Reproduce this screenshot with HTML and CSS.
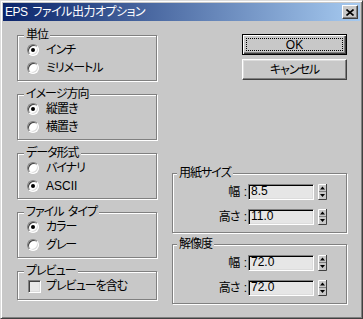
FILE: index.html
```html
<!DOCTYPE html>
<html>
  <head>
    <link rel="stylesheet" href="styles.css">
  </head>
  <body>
    <div class="window">
      <div class="titlebar">
        <span class="title">EPS ファイル出力オプション</span>
        <button class="close-btn">
          <svg width="8" height="7" viewBox="0 0 8 7"><path d="M0.5 0.5L7.5 6.5M7.5 0.5L0.5 6.5" stroke="#000" stroke-width="1.6"/></svg>
        </button>
      </div>
      <main class="content">
        <div class="left-col">
          <fieldset class="group">
            <legend>単位</legend>
            <label class="option"><span class="radio checked"></span>インチ</label>
            <label class="option"><span class="radio"></span>ミリメートル</label>
          </fieldset>
          <fieldset class="group">
            <legend>イメージ方向</legend>
            <label class="option"><span class="radio checked"></span>縦置き</label>
            <label class="option"><span class="radio"></span>横置き</label>
          </fieldset>
          <fieldset class="group">
            <legend>データ形式</legend>
            <label class="option"><span class="radio"></span>バイナリ</label>
            <label class="option latin"><span class="radio checked"></span>ASCII</label>
          </fieldset>
          <fieldset class="group">
            <legend>ファイル タイプ</legend>
            <label class="option"><span class="radio checked"></span>カラー</label>
            <label class="option"><span class="radio"></span>グレー</label>
          </fieldset>
          <fieldset class="group preview-group">
            <legend>プレビュー</legend>
            <label class="option"><span class="checkbox"></span>プレビューを含む</label>
          </fieldset>
        </div>

        <div class="right-col">
          <div class="buttons">
            <button class="btn default">OK</button>
            <button class="btn">キャンセル</button>
          </div>

          <fieldset class="group num-group size-group">
            <legend>用紙サイズ</legend>
            <div class="field-row">
              <span class="field-label">幅 :</span>
              <span class="field-input">8.5</span>
              <svg class="spinner" width="9" height="16" viewBox="0 0 9 16">
                <rect width="9" height="16" fill="#c8c8c8"/>
                <path d="M0.5 15V0.5H8" stroke="#fff" fill="none"/>
                <path d="M0.5 15.5H8.5V0" stroke="#404040" fill="none"/>
                <path d="M1 7.5H8" stroke="#808080"/>
                <path d="M4.5 2.5L7 5.5H2Z" fill="#000"/>
                <path d="M2 10H7L4.5 13Z" fill="#000"/>
              </svg>
            </div>
            <div class="field-row">
              <span class="field-label">高さ :</span>
              <span class="field-input">11.0</span>
              <svg class="spinner" width="9" height="16" viewBox="0 0 9 16">
                <rect width="9" height="16" fill="#c8c8c8"/>
                <path d="M0.5 15V0.5H8" stroke="#fff" fill="none"/>
                <path d="M0.5 15.5H8.5V0" stroke="#404040" fill="none"/>
                <path d="M1 7.5H8" stroke="#808080"/>
                <path d="M4.5 2.5L7 5.5H2Z" fill="#000"/>
                <path d="M2 10H7L4.5 13Z" fill="#000"/>
              </svg>
            </div>
          </fieldset>

          <fieldset class="group num-group res-group">
            <legend>解像度</legend>
            <div class="field-row">
              <span class="field-label">幅 :</span>
              <span class="field-input">72.0</span>
              <svg class="spinner" width="9" height="16" viewBox="0 0 9 16">
                <rect width="9" height="16" fill="#c8c8c8"/>
                <path d="M0.5 15V0.5H8" stroke="#fff" fill="none"/>
                <path d="M0.5 15.5H8.5V0" stroke="#404040" fill="none"/>
                <path d="M1 7.5H8" stroke="#808080"/>
                <path d="M4.5 2.5L7 5.5H2Z" fill="#000"/>
                <path d="M2 10H7L4.5 13Z" fill="#000"/>
              </svg>
            </div>
            <div class="field-row">
              <span class="field-label">高さ :</span>
              <span class="field-input">72.0</span>
              <svg class="spinner" width="9" height="16" viewBox="0 0 9 16">
                <rect width="9" height="16" fill="#c8c8c8"/>
                <path d="M0.5 15V0.5H8" stroke="#fff" fill="none"/>
                <path d="M0.5 15.5H8.5V0" stroke="#404040" fill="none"/>
                <path d="M1 7.5H8" stroke="#808080"/>
                <path d="M4.5 2.5L7 5.5H2Z" fill="#000"/>
                <path d="M2 10H7L4.5 13Z" fill="#000"/>
              </svg>
            </div>
          </fieldset>
        </div>
      </main>
    </div>
  </body>
</html>
```

FILE: styles.css
```css
* {
  box-sizing: border-box;
}

body {
  margin: 0;
  background: #c8c8c8;
  color: #000;
  font-family: "Liberation Sans", "Noto Sans CJK JP", sans-serif;
  font-size: 12px;
  font-feature-settings: "palt";
  letter-spacing: -1px;
  word-spacing: 2px;
}

.window {
  width: 363px;
  height: 319px;
  display: flex;
  flex-direction: column;
  background: #c8c8c8;
  border: 1px solid;
  border-color: #dcdcdc #404040 #404040 #dcdcdc;
  box-shadow: inset 1px 1px #fff, inset -1px -1px #808080;
  padding: 2px;
}

.titlebar {
  flex: none;
  height: 18px;
  display: flex;
  align-items: center;
  justify-content: space-between;
  padding: 0 2px 0 2px;
  background: linear-gradient(to right, #0a246a, #a6caf0);
  color: #fff;
  line-height: 12px;
  letter-spacing: -0.5px;
}

.close-btn {
  all: unset;
  box-sizing: border-box;
  width: 16px;
  height: 14px;
  display: flex;
  align-items: center;
  justify-content: center;
  background: #c8c8c8;
  border: 1px solid;
  border-color: #fff #404040 #404040 #fff;
  box-shadow: inset -1px -1px #808080;
}

.content {
  flex: 1;
  display: flex;
  gap: 15px;
  padding: 8px 13px 12px 14px;
}

.left-col {
  width: 140px;
  display: flex;
  flex-direction: column;
  gap: 7px;
}

.right-col {
  width: 175px;
  display: flex;
  flex-direction: column;
  padding-top: 5px;
}

/* etched group box */
.group {
  margin: 0;
  min-width: 0;
  padding: 0 0 3px 6px;
  border: 1px solid #808080;
  box-shadow: inset 1px 1px #fff, 1px 1px #fff;
}

.group legend {
  padding: 0 2px;
  height: 12px;
  line-height: 12px;
  background: #c8c8c8;
}

.preview-group {
  padding-bottom: 4px;
}

.option {
  display: flex;
  align-items: center;
  height: 18px;
  line-height: 12px;
}

.option.latin {
  letter-spacing: 0;
}

.radio {
  flex: none;
  position: relative;
  width: 12px;
  height: 12px;
  margin: 0 7px 0 3px;
  border-radius: 50%;
  background: #fff;
  border: 1px solid;
  border-color: #808080 #fff #fff #808080;
  box-shadow: inset 1px 1px #404040, inset -1px -1px #dcdcdc;
}

.radio.checked::after {
  content: "";
  position: absolute;
  left: 3px;
  top: 3px;
  width: 4px;
  height: 4px;
  border-radius: 50%;
  background: #000;
}

.checkbox {
  flex: none;
  width: 13px;
  height: 13px;
  margin: 0 5px 0 4px;
  background: #e8e8e8;
  border: 1px solid;
  border-color: #808080 #fff #fff #808080;
  box-shadow: inset 1px 1px #404040, inset -1px -1px #dcdcdc;
}

.buttons {
  display: flex;
  flex-direction: column;
  align-items: flex-end;
  gap: 4px;
}

.btn {
  all: unset;
  box-sizing: border-box;
  position: relative;
  width: 105px;
  height: 21px;
  text-align: center;
  line-height: 18px;
  letter-spacing: -1px;
  background: #c8c8c8;
  border: 1px solid;
  border-color: #fff #404040 #404040 #fff;
  box-shadow: inset -1px -1px #808080, inset 1px 1px #dcdcdc;
}

.btn.default {
  letter-spacing: 0;
  border-color: #000;
  box-shadow: inset 1px 1px #fff, inset -1px -1px #404040, inset -2px -2px #808080;
}

.btn.default::after {
  content: "";
  position: absolute;
  inset: 3px;
  border: 1px dotted #000;
}

.num-group {
  padding: 0 19px 7px 4px;
}

.size-group {
  margin-top: auto;
}

.res-group {
  margin-top: 5px;
}

.field-row {
  display: flex;
  align-items: center;
  justify-content: flex-end;
  height: 16px;
  margin-top: 9px;
}

.field-row:first-of-type {
  margin-top: 5px;
}

.field-label {
  margin-right: 2px;
  line-height: 12px;
}

.field-input {
  width: 66px;
  height: 16px;
  padding-left: 2px;
  line-height: 13px;
  letter-spacing: 0;
  background: #e6e6e6;
  border: 1px solid;
  border-color: #808080 #fff #fff #808080;
  box-shadow: inset 1px 1px #000, inset -1px -1px #dcdcdc;
}

.spinner {
  flex: none;
  margin-left: 4px;
}
```
